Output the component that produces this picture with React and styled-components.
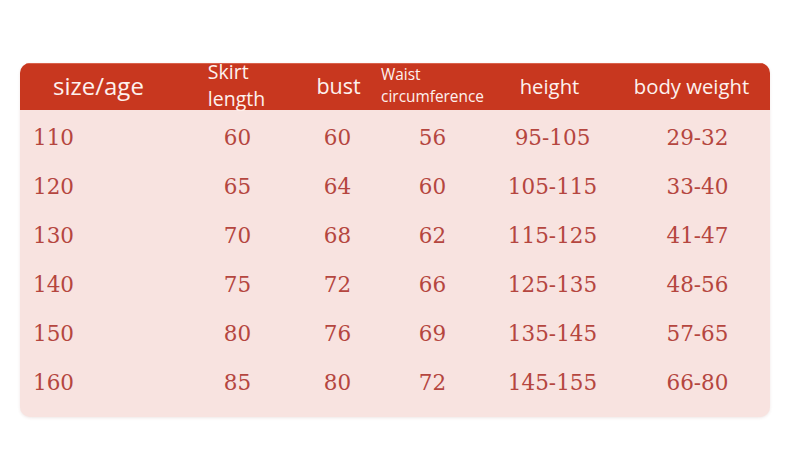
import React from 'react';
import styled, { createGlobalStyle } from 'styled-components';

const columns = [
  { key: 'size', label: ['size/age'], size: 24, align: 'left' },
  { key: 'skirt', label: ['Skirt', 'length'], size: 19.5, lh: 26.5, shift: -1 },
  { key: 'bust', label: ['bust'], size: 21.5, shift: 1 },
  { key: 'waist', label: ['Waist', 'circumference'], size: 15.4, lh: 21.5 },
  { key: 'height', label: ['height'], size: 20.3, shift: -3 },
  { key: 'weight', label: ['body weight'], size: 20.3, shift: -6 },
];

const rows = [
  ['110', '60', '60', '56', '95-105', '29-32'],
  ['120', '65', '64', '60', '105-115', '33-40'],
  ['130', '70', '68', '62', '115-125', '41-47'],
  ['140', '75', '72', '66', '125-135', '48-56'],
  ['150', '80', '76', '69', '135-145', '57-65'],
  ['160', '85', '80', '72', '145-155', '66-80'],
];

const GlobalStyle = createGlobalStyle`
  html, body {
    margin: 0;
    padding: 0;
    background: #ffffff;
  }
`;

const Page = styled.div`
  width: 800px;
  height: 450px;
  padding: 63px 0 0 20px;
  box-sizing: border-box;
`;

const Card = styled.div`
  width: 750px;
  border-radius: 10px;
  overflow: hidden;
  background: #f8e3e0;
  box-shadow: 0 1px 3px rgba(120, 60, 50, 0.12);
  padding-bottom: 10px;
`;

const Grid = styled.div`
  display: grid;
  grid-template-columns: 165px 105px 95px 95px 145px 145px;
`;

const HeaderRow = styled(Grid)`
  height: 47px;
  grid-template-rows: 46px;
  background: #c8371f;
  border-top: 1px solid #d9624c;
  box-sizing: border-box;
  margin-bottom: 3px;
`;

const HeadCell = styled.div`
  display: flex;
  align-items: center;
  min-height: 0;
  justify-content: ${(p) => (p.$align === 'left' ? 'flex-start' : 'center')};
  padding-left: ${(p) => (p.$align === 'left' ? '33px' : '0')};
  padding-bottom: 3px;
  font-family: 'Open Sans', 'Liberation Sans', sans-serif;
  color: #fdf1ee;
  font-size: ${(p) => p.$size}px;
  line-height: ${(p) => p.$lh || 24}px;
`;

const Label = styled.span`
  display: inline-block;
  text-align: left;
  white-space: nowrap;
  position: relative;
  left: ${(p) => p.$shift || 0}px;
`;

const Row = styled(Grid)`
  height: 49px;
  align-items: center;
`;

const Cell = styled.div`
  text-align: ${(p) => (p.$align === 'left' ? 'left' : 'center')};
  padding-left: ${(p) => (p.$align === 'left' ? '13px' : '0')};
  font-family: 'DejaVu Serif', 'Liberation Serif', serif;
  font-size: 21.5px;
  color: #b5463f;
`;

export default function App() {
  return (
    <Page>
      <GlobalStyle />
      <Card>
        <HeaderRow>
          {columns.map((c) => (
            <HeadCell key={c.key} $align={c.align} $size={c.size} $lh={c.lh}>
              <Label $shift={c.shift}>
                {c.label.map((line, i) => (
                  <React.Fragment key={i}>
                    {i > 0 && <br />}
                    {line}
                  </React.Fragment>
                ))}
              </Label>
            </HeadCell>
          ))}
        </HeaderRow>
        {rows.map((r) => (
          <Row key={r[0]}>
            {r.map((v, i) => (
              <Cell key={i} $align={columns[i].align}>
                {v}
              </Cell>
            ))}
          </Row>
        ))}
      </Card>
    </Page>
  );
}
